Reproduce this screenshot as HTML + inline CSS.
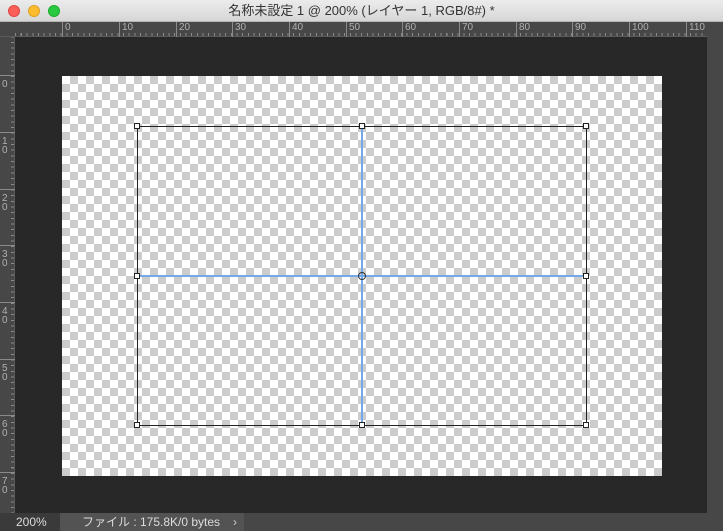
<!DOCTYPE html>
<html><head><meta charset="utf-8"><style>
*{margin:0;padding:0;box-sizing:border-box}
body{width:723px;height:531px;overflow:hidden;background:#282828;font-family:"Liberation Sans","Noto Sans CJK JP",sans-serif;position:relative}
.title{position:absolute;left:0;top:0;width:723px;height:22px;background:linear-gradient(#ececec,#d6d6d6);border-bottom:1px solid #b5b5b5;text-align:center;font-size:13px;line-height:22px;color:#333}
.dot{position:absolute;top:5px;width:12px;height:12px;border-radius:50%}
.rt{position:absolute;left:0;top:22px;width:707px;height:15px;background:#474747;border-bottom:1px solid #5a5a5a}
.rl{position:absolute;left:0;top:37px;width:15px;height:476px;background:#474747;border-right:1px solid #5a5a5a}
.minor-t{position:absolute;left:15px;right:0;bottom:0;height:3px;background:repeating-linear-gradient(90deg,#8a8a8a 0 1px,transparent 1px 5.67px);background-position:6px 0}
.minor-l{position:absolute;top:0;bottom:0;right:0;width:3px;background:repeating-linear-gradient(180deg,#8a8a8a 0 1px,transparent 1px 5.67px);background-position:0 5px}
.mt{position:absolute;top:0;width:1px;height:15px;background:#8a8a8a}
.lt{position:absolute;font-size:10px;color:#b0b0b0;top:0}
.ml{position:absolute;left:0;height:1px;width:15px;background:#8a8a8a}
.ll{position:absolute;font-size:10px;color:#b0b0b0;left:2px;line-height:9px;width:7px}
.sb{position:absolute;left:707px;top:22px;width:16px;height:491px;background:#474747}
.img{position:absolute;left:62px;top:76px;width:600px;height:400px;background-color:#fff;background-image:conic-gradient(#ccc 25%,#fff 0 50%,#ccc 0 75%,#fff 0);background-size:16px 16px}
.status{position:absolute;left:0;top:513px;width:723px;height:18px;background:#474747;font-size:12px;color:#ddd;line-height:18px}
.h{position:absolute;width:6px;height:6px;border:1px solid #222;background:#fff}
</style></head><body>
<div class="title">名称未設定 1 @ 200% (レイヤー 1, RGB/8#) *
<div class="dot" style="left:8px;background:#fc5f57;border:1px solid #df4744"></div>
<div class="dot" style="left:28px;background:#fdbc2e;border:1px solid #dea123"></div>
<div class="dot" style="left:48px;background:#28c840;border:1px solid #1dad2b"></div>
</div>
<div class="rt"><div class="minor-t"></div>
<div class="mt" style="left:62px"></div><span class="lt" style="left:65px">0</span>
<div class="mt" style="left:119px"></div><span class="lt" style="left:122px">10</span>
<div class="mt" style="left:176px"></div><span class="lt" style="left:179px">20</span>
<div class="mt" style="left:232px"></div><span class="lt" style="left:235px">30</span>
<div class="mt" style="left:289px"></div><span class="lt" style="left:292px">40</span>
<div class="mt" style="left:346px"></div><span class="lt" style="left:349px">50</span>
<div class="mt" style="left:402px"></div><span class="lt" style="left:405px">60</span>
<div class="mt" style="left:459px"></div><span class="lt" style="left:462px">70</span>
<div class="mt" style="left:516px"></div><span class="lt" style="left:519px">80</span>
<div class="mt" style="left:572px"></div><span class="lt" style="left:575px">90</span>
<div class="mt" style="left:629px"></div><span class="lt" style="left:632px">100</span>
<div class="mt" style="left:686px"></div><span class="lt" style="left:689px">110</span>
</div>
<div class="rl"><div class="minor-l"></div>
<div class="ml" style="top:38px"></div><span class="ll" style="top:43px">0</span>
<div class="ml" style="top:95px"></div><span class="ll" style="top:100px">1<br>0</span>
<div class="ml" style="top:152px"></div><span class="ll" style="top:157px">2<br>0</span>
<div class="ml" style="top:208px"></div><span class="ll" style="top:213px">3<br>0</span>
<div class="ml" style="top:265px"></div><span class="ll" style="top:270px">4<br>0</span>
<div class="ml" style="top:322px"></div><span class="ll" style="top:327px">5<br>0</span>
<div class="ml" style="top:378px"></div><span class="ll" style="top:383px">6<br>0</span>
<div class="ml" style="top:435px"></div><span class="ll" style="top:440px">7<br>0</span>
</div>
<div class="sb"></div>
<div class="img"></div>
<div style="position:absolute;left:137px;top:126px;width:450px;height:300px;border:1px solid #222"></div>
<div style="position:absolute;left:361px;top:127px;width:2px;height:298px;background:#74a9e8"></div>
<div style="position:absolute;left:138px;top:275px;width:448px;height:2px;background:#74a9e8"></div>
<div class="h" style="left:134px;top:123px"></div><div class="h" style="left:359px;top:123px"></div><div class="h" style="left:583px;top:123px"></div>
<div class="h" style="left:134px;top:273px"></div><div class="h" style="left:583px;top:273px"></div>
<div class="h" style="left:134px;top:422px"></div><div class="h" style="left:359px;top:422px"></div><div class="h" style="left:583px;top:422px"></div>
<div style="position:absolute;left:358px;top:272px;width:8px;height:8px;border:1px solid #333;border-radius:50%"></div>
<div class="status"><span style="position:absolute;left:0;width:60px;height:18px;background:#3a3a3a;padding-left:16px">200%</span>
<span style="position:absolute;left:60px;width:184px;height:18px;background:#535353;padding-left:22px">ファイル : 175.8K/0 bytes</span>
<span style="position:absolute;left:233px;color:#ccc">›</span></div>
</body></html>
